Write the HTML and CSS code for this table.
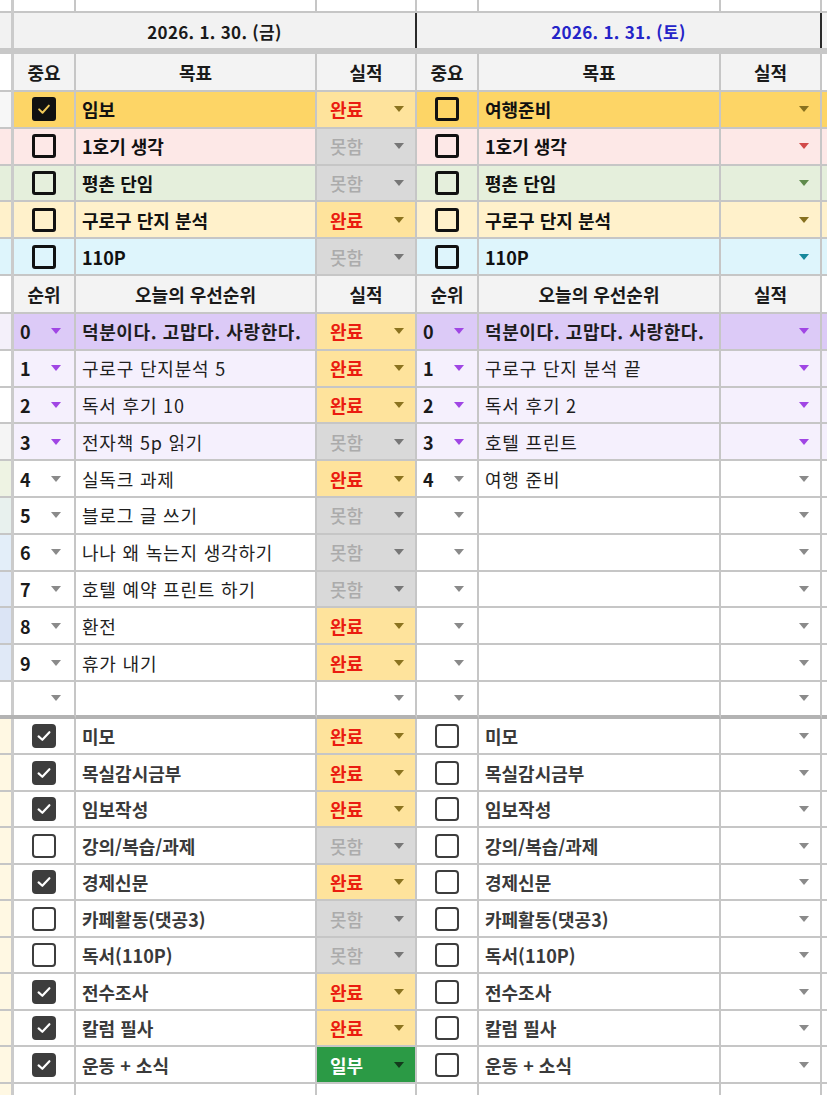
FILE: index.html
```html
<!DOCTYPE html>
<html lang="ko">
<head>
<meta charset="utf-8">
<title>Daily sheet</title>
<link rel="stylesheet" href="styles.css">
</head>
<body>
<div class="sheet">
  <div class="row r-top">
    <div class="c sl"></div><div class="c dv"></div>
    <div class="c"></div><div class="c"></div><div class="c"></div>
    <div class="c"></div><div class="c"></div><div class="c"></div><div class="c edge"></div>
  </div>
  <div class="row r-date">
    <div class="c sl gray"></div><div class="c dv"></div>
    <div class="c date">2026. 1. 30. (금)</div>
    <div class="c date sat">2026. 1. 31. (토)</div>
    <div class="c edge gray"></div>
  </div>
  <div class="freeze"></div>

  <div class="row r-head">
    <div class="c sl"></div><div class="c dv"></div>
    <div class="c hd">중요</div><div class="c hd">목표</div><div class="c hd">실적</div>
    <div class="c hd">중요</div><div class="c hd">목표</div><div class="c hd">실적</div><div class="c edge"></div>
  </div>

  <div class="row goal g-yel">
    <div class="c sl s-wh"></div><div class="c dv"></div>
    <div class="c chk"><span class="cb on"><svg viewBox="0 0 24 24"><polyline points="5.5,12.5 10,17 18.5,7.5"/></svg></span></div>
    <div class="c txt">임보</div>
    <div class="c st ok"><span>완료</span><i class="ar"></i></div>
    <div class="c chk"><span class="cb"></span></div>
    <div class="c txt">여행준비</div>
    <div class="c st none"><span></span><i class="ar"></i></div>
    <div class="c edge"></div>
  </div>
  <div class="row goal g-pink">
    <div class="c sl"></div><div class="c dv"></div>
    <div class="c chk"><span class="cb"></span></div>
    <div class="c txt">1호기 생각</div>
    <div class="c st no"><span>못함</span><i class="ar"></i></div>
    <div class="c chk"><span class="cb"></span></div>
    <div class="c txt">1호기 생각</div>
    <div class="c st none"><span></span><i class="ar"></i></div>
    <div class="c edge"></div>
  </div>
  <div class="row goal g-grn">
    <div class="c sl"></div><div class="c dv"></div>
    <div class="c chk"><span class="cb"></span></div>
    <div class="c txt">평촌 단임</div>
    <div class="c st no"><span>못함</span><i class="ar"></i></div>
    <div class="c chk"><span class="cb"></span></div>
    <div class="c txt">평촌 단임</div>
    <div class="c st none"><span></span><i class="ar"></i></div>
    <div class="c edge"></div>
  </div>
  <div class="row goal g-lyel">
    <div class="c sl"></div><div class="c dv"></div>
    <div class="c chk"><span class="cb"></span></div>
    <div class="c txt">구로구 단지 분석</div>
    <div class="c st ok"><span>완료</span><i class="ar"></i></div>
    <div class="c chk"><span class="cb"></span></div>
    <div class="c txt">구로구 단지 분석</div>
    <div class="c st none"><span></span><i class="ar"></i></div>
    <div class="c edge"></div>
  </div>
  <div class="row goal g-cyan">
    <div class="c sl"></div><div class="c dv"></div>
    <div class="c chk"><span class="cb"></span></div>
    <div class="c txt">110P</div>
    <div class="c st no"><span>못함</span><i class="ar"></i></div>
    <div class="c chk"><span class="cb"></span></div>
    <div class="c txt">110P</div>
    <div class="c st none"><span></span><i class="ar"></i></div>
    <div class="c edge"></div>
  </div>

  <div class="row r-head">
    <div class="c sl"></div><div class="c dv"></div>
    <div class="c hd">순위</div><div class="c hd">오늘의 우선순위</div><div class="c hd">실적</div>
    <div class="c hd">순위</div><div class="c hd">오늘의 우선순위</div><div class="c hd">실적</div><div class="c edge"></div>
  </div>

  <div class="row pr p-top">
    <div class="c sl s-l"></div><div class="c dv"></div>
    <div class="c rk"><span>0</span><i class="ar"></i></div>
    <div class="c txt">덕분이다. 고맙다. 사랑한다.</div>
    <div class="c st ok"><span>완료</span><i class="ar"></i></div>
    <div class="c rk"><span>0</span><i class="ar"></i></div>
    <div class="c txt">덕분이다. 고맙다. 사랑한다.</div>
    <div class="c st none"><span></span><i class="ar"></i></div>
    <div class="c edge"></div>
  </div>
  <div class="row pr p-lav">
    <div class="c sl"></div><div class="c dv"></div>
    <div class="c rk"><span>1</span><i class="ar"></i></div>
    <div class="c txt">구로구 단지분석 5</div>
    <div class="c st ok"><span>완료</span><i class="ar"></i></div>
    <div class="c rk"><span>1</span><i class="ar"></i></div>
    <div class="c txt">구로구 단지 분석 끝</div>
    <div class="c st none"><span></span><i class="ar"></i></div>
    <div class="c edge"></div>
  </div>
  <div class="row pr p-lav">
    <div class="c sl"></div><div class="c dv"></div>
    <div class="c rk"><span>2</span><i class="ar"></i></div>
    <div class="c txt">독서 후기 10</div>
    <div class="c st ok"><span>완료</span><i class="ar"></i></div>
    <div class="c rk"><span>2</span><i class="ar"></i></div>
    <div class="c txt">독서 후기 2</div>
    <div class="c st none"><span></span><i class="ar"></i></div>
    <div class="c edge"></div>
  </div>
  <div class="row pr p-lav">
    <div class="c sl s-f"></div><div class="c dv"></div>
    <div class="c rk"><span>3</span><i class="ar"></i></div>
    <div class="c txt">전자책 5p 읽기</div>
    <div class="c st no"><span>못함</span><i class="ar"></i></div>
    <div class="c rk"><span>3</span><i class="ar"></i></div>
    <div class="c txt">호텔 프린트</div>
    <div class="c st none"><span></span><i class="ar"></i></div>
    <div class="c edge"></div>
  </div>
  <div class="row pr">
    <div class="c sl s-g"></div><div class="c dv"></div>
    <div class="c rk"><span>4</span><i class="ar"></i></div>
    <div class="c txt">실독크 과제</div>
    <div class="c st ok"><span>완료</span><i class="ar"></i></div>
    <div class="c rk"><span>4</span><i class="ar"></i></div>
    <div class="c txt">여행 준비</div>
    <div class="c st none"><span></span><i class="ar"></i></div>
    <div class="c edge"></div>
  </div>
  <div class="row pr">
    <div class="c sl s-gb"></div><div class="c dv"></div>
    <div class="c rk"><span>5</span><i class="ar"></i></div>
    <div class="c txt">블로그 글 쓰기</div>
    <div class="c st no"><span>못함</span><i class="ar"></i></div>
    <div class="c rk"><span></span><i class="ar"></i></div>
    <div class="c txt"></div>
    <div class="c st none"><span></span><i class="ar"></i></div>
    <div class="c edge"></div>
  </div>
  <div class="row pr">
    <div class="c sl s-b1"></div><div class="c dv"></div>
    <div class="c rk"><span>6</span><i class="ar"></i></div>
    <div class="c txt">나나 왜 녹는지 생각하기</div>
    <div class="c st no"><span>못함</span><i class="ar"></i></div>
    <div class="c rk"><span></span><i class="ar"></i></div>
    <div class="c txt"></div>
    <div class="c st none"><span></span><i class="ar"></i></div>
    <div class="c edge"></div>
  </div>
  <div class="row pr">
    <div class="c sl s-b2"></div><div class="c dv"></div>
    <div class="c rk"><span>7</span><i class="ar"></i></div>
    <div class="c txt">호텔 예약 프린트 하기</div>
    <div class="c st no"><span>못함</span><i class="ar"></i></div>
    <div class="c rk"><span></span><i class="ar"></i></div>
    <div class="c txt"></div>
    <div class="c st none"><span></span><i class="ar"></i></div>
    <div class="c edge"></div>
  </div>
  <div class="row pr">
    <div class="c sl s-b3"></div><div class="c dv"></div>
    <div class="c rk"><span>8</span><i class="ar"></i></div>
    <div class="c txt">환전</div>
    <div class="c st ok"><span>완료</span><i class="ar"></i></div>
    <div class="c rk"><span></span><i class="ar"></i></div>
    <div class="c txt"></div>
    <div class="c st none"><span></span><i class="ar"></i></div>
    <div class="c edge"></div>
  </div>
  <div class="row pr">
    <div class="c sl s-b2"></div><div class="c dv"></div>
    <div class="c rk"><span>9</span><i class="ar"></i></div>
    <div class="c txt">휴가 내기</div>
    <div class="c st ok"><span>완료</span><i class="ar"></i></div>
    <div class="c rk"><span></span><i class="ar"></i></div>
    <div class="c txt"></div>
    <div class="c st none"><span></span><i class="ar"></i></div>
    <div class="c edge"></div>
  </div>
  <div class="row pr last">
    <div class="c sl"></div><div class="c dv"></div>
    <div class="c rk"><span></span><i class="ar"></i></div>
    <div class="c txt"></div>
    <div class="c st none"><span></span><i class="ar"></i></div>
    <div class="c rk"><span></span><i class="ar"></i></div>
    <div class="c txt"></div>
    <div class="c st none"><span></span><i class="ar"></i></div>
    <div class="c edge"></div>
  </div>

  <div class="row cl">
    <div class="c sl s-y"></div><div class="c dv"></div>
    <div class="c chk"><span class="cb on"><svg viewBox="0 0 24 24"><polyline points="5.5,12.5 10,16.5 18.5,7.5"/></svg></span></div>
    <div class="c txt">미모</div>
    <div class="c st ok"><span>완료</span><i class="ar"></i></div>
    <div class="c chk"><span class="cb"></span></div>
    <div class="c txt">미모</div>
    <div class="c st none"><span></span><i class="ar"></i></div>
    <div class="c edge"></div>
  </div>
  <div class="row cl">
    <div class="c sl s-y"></div><div class="c dv"></div>
    <div class="c chk"><span class="cb on"><svg viewBox="0 0 24 24"><polyline points="5.5,12.5 10,16.5 18.5,7.5"/></svg></span></div>
    <div class="c txt">목실감시금부</div>
    <div class="c st ok"><span>완료</span><i class="ar"></i></div>
    <div class="c chk"><span class="cb"></span></div>
    <div class="c txt">목실감시금부</div>
    <div class="c st none"><span></span><i class="ar"></i></div>
    <div class="c edge"></div>
  </div>
  <div class="row cl">
    <div class="c sl s-y"></div><div class="c dv"></div>
    <div class="c chk"><span class="cb on"><svg viewBox="0 0 24 24"><polyline points="5.5,12.5 10,16.5 18.5,7.5"/></svg></span></div>
    <div class="c txt">임보작성</div>
    <div class="c st ok"><span>완료</span><i class="ar"></i></div>
    <div class="c chk"><span class="cb"></span></div>
    <div class="c txt">임보작성</div>
    <div class="c st none"><span></span><i class="ar"></i></div>
    <div class="c edge"></div>
  </div>
  <div class="row cl">
    <div class="c sl s-y"></div><div class="c dv"></div>
    <div class="c chk"><span class="cb"></span></div>
    <div class="c txt">강의/복습/과제</div>
    <div class="c st no"><span>못함</span><i class="ar"></i></div>
    <div class="c chk"><span class="cb"></span></div>
    <div class="c txt">강의/복습/과제</div>
    <div class="c st none"><span></span><i class="ar"></i></div>
    <div class="c edge"></div>
  </div>
  <div class="row cl">
    <div class="c sl s-y"></div><div class="c dv"></div>
    <div class="c chk"><span class="cb on"><svg viewBox="0 0 24 24"><polyline points="5.5,12.5 10,16.5 18.5,7.5"/></svg></span></div>
    <div class="c txt">경제신문</div>
    <div class="c st ok"><span>완료</span><i class="ar"></i></div>
    <div class="c chk"><span class="cb"></span></div>
    <div class="c txt">경제신문</div>
    <div class="c st none"><span></span><i class="ar"></i></div>
    <div class="c edge"></div>
  </div>
  <div class="row cl">
    <div class="c sl s-y"></div><div class="c dv"></div>
    <div class="c chk"><span class="cb"></span></div>
    <div class="c txt">카페활동(댓공3)</div>
    <div class="c st no"><span>못함</span><i class="ar"></i></div>
    <div class="c chk"><span class="cb"></span></div>
    <div class="c txt">카페활동(댓공3)</div>
    <div class="c st none"><span></span><i class="ar"></i></div>
    <div class="c edge"></div>
  </div>
  <div class="row cl">
    <div class="c sl s-y"></div><div class="c dv"></div>
    <div class="c chk"><span class="cb"></span></div>
    <div class="c txt">독서(110P)</div>
    <div class="c st no"><span>못함</span><i class="ar"></i></div>
    <div class="c chk"><span class="cb"></span></div>
    <div class="c txt">독서(110P)</div>
    <div class="c st none"><span></span><i class="ar"></i></div>
    <div class="c edge"></div>
  </div>
  <div class="row cl">
    <div class="c sl s-y"></div><div class="c dv"></div>
    <div class="c chk"><span class="cb on"><svg viewBox="0 0 24 24"><polyline points="5.5,12.5 10,16.5 18.5,7.5"/></svg></span></div>
    <div class="c txt">전수조사</div>
    <div class="c st ok"><span>완료</span><i class="ar"></i></div>
    <div class="c chk"><span class="cb"></span></div>
    <div class="c txt">전수조사</div>
    <div class="c st none"><span></span><i class="ar"></i></div>
    <div class="c edge"></div>
  </div>
  <div class="row cl">
    <div class="c sl s-y"></div><div class="c dv"></div>
    <div class="c chk"><span class="cb on"><svg viewBox="0 0 24 24"><polyline points="5.5,12.5 10,16.5 18.5,7.5"/></svg></span></div>
    <div class="c txt">칼럼 필사</div>
    <div class="c st ok"><span>완료</span><i class="ar"></i></div>
    <div class="c chk"><span class="cb"></span></div>
    <div class="c txt">칼럼 필사</div>
    <div class="c st none"><span></span><i class="ar"></i></div>
    <div class="c edge"></div>
  </div>
  <div class="row cl">
    <div class="c sl s-y"></div><div class="c dv"></div>
    <div class="c chk"><span class="cb on"><svg viewBox="0 0 24 24"><polyline points="5.5,12.5 10,16.5 18.5,7.5"/></svg></span></div>
    <div class="c txt">운동 + 소식</div>
    <div class="c st part"><span>일부</span><i class="ar"></i></div>
    <div class="c chk"><span class="cb"></span></div>
    <div class="c txt">운동 + 소식</div>
    <div class="c st none"><span></span><i class="ar"></i></div>
    <div class="c edge"></div>
  </div>
  <div class="row cl">
    <div class="c sl s-y"></div><div class="c dv"></div>
    <div class="c"></div><div class="c"></div><div class="c"></div>
    <div class="c"></div><div class="c"></div><div class="c"></div><div class="c edge"></div>
  </div>
</div>
</body>
</html>
```

FILE: styles.css
```css
* { box-sizing: border-box; }
html, body { margin: 0; padding: 0; background: #ffffff; }
body {
  font-family: "Noto Sans CJK KR", "Noto Sans", sans-serif;
  color: #1a1a1a;
  width: 827px;
  height: 1095px;
  overflow: hidden;
}
.sheet { width: 827px; }

.row {
  display: grid;
  grid-template-columns: 11px 3px 62px 241px 100px 62px 242px 101px 1fr;
  height: 36.8px;
}
.c {
  border-right: 2px solid #c6c6c6;
  border-bottom: 2px solid #c6c6c6;
  display: flex;
  align-items: center;
  min-width: 0;
  overflow: hidden;
  white-space: nowrap;
}
.c.sl { border-right: none; }
.c.dv { background: #cbcbcb; border: none; }
.c.edge { border-right: none; }

.r-top { height: 13px; }

.r-date {
  grid-template-columns: 11px 3px 403px 405px 1fr;
  height: 35px;
}
.r-date .c { border-bottom: none; background: #f2f2f2; }
.r-date .c.dv { background: #cbcbcb; }
.c.date {
  justify-content: center;
  border-right: 2px solid #2a2a2a;
  font-size: 17px;
  font-weight: 700;
  letter-spacing: 0.3px;
  color: #1a1a1a;
  padding-top: 1px;
}
.c.date.sat { color: #2424c8; }
.c.gray { background: #f2f2f2; }

.freeze { height: 6px; background: #c8c8c8; }

.r-head { height: 38px; }
.r-head .c.hd {
  justify-content: center;
  background: #f3f3f3;
  font-weight: 700;
  font-size: 18px;
  color: #1a1a1a;
}

.c.txt { padding-left: 6px; font-size: 18px; }
.goal .c.txt { font-weight: 700; color: #111; }
.pr .c.txt { font-weight: 400; color: #1e1e1e; letter-spacing: 0.8px; }
.pr.p-top .c.txt { font-weight: 700; letter-spacing: 0.6px; }
.cl .c.txt { font-weight: 700; color: #3a3a3a; }

.c.chk { justify-content: center; }
.cb {
  width: 24px;
  height: 24px;
  border: 3px solid #111;
  border-radius: 3px;
  display: flex;
  align-items: center;
  justify-content: center;
}
.cb svg { width: 22px; height: 22px; fill: none; stroke-width: 2.6; stroke-linecap: round; stroke-linejoin: round; }
.cb.on { background: #111; }
.goal .cb.on svg { stroke: #f0c95a; }
.cl .cb { border: 2.5px solid #3d3d3d; border-radius: 4px; }
.cl .cb.on { background: #3d3d3d; }
.cl .cb.on svg { stroke: #ffffff; }

.ar {
  display: block;
  width: 0;
  height: 0;
  border-left: 5.5px solid transparent;
  border-right: 5.5px solid transparent;
  border-top: 6px solid #858585;
  flex: none;
}

.c.st {
  justify-content: space-between;
  padding: 0 11px 0 13px;
  font-size: 18px;
  font-weight: 700;
}
.c.st.ok { background: #fee39c; color: #ea1c10; }
.c.st.ok .ar { border-top-color: #8b731f; }
.c.st.no { background: #d9d9d9; color: #ababab; font-weight: 500; }
.c.st.no .ar { border-top-color: #777777; }
.c.st.part { background: #2b9a45; color: #ffffff; }
.c.st.part .ar { border-top-color: #133a1c; }
.c.st.none .ar { border-top-color: #8a8a8a; }

.c.rk {
  justify-content: space-between;
  padding: 0 13px 0 6px;
  font-size: 18px;
  font-weight: 700;
  color: #1a1a1a;
}
.c.rk .ar { border-top-color: #8a8a8a; }

/* goal rows */
.g-yel .c.txt, .g-yel .c.chk, .g-yel .c.st.none, .g-yel .c.edge { background: #fdd566; }
.g-yel .c.st.none .ar { border-top-color: #88711f; }
.g-pink .c.txt, .g-pink .c.chk, .g-pink .c.st.none, .g-pink .c.edge, .g-pink .c.sl { background: #fde8e7; }
.g-pink .c.st.none .ar { border-top-color: #d24a4a; }
.g-grn .c.txt, .g-grn .c.chk, .g-grn .c.st.none, .g-grn .c.edge, .g-grn .c.sl { background: #e5efdc; }
.g-grn .c.st.none .ar { border-top-color: #5f8a4c; }
.g-lyel .c.txt, .g-lyel .c.chk, .g-lyel .c.st.none, .g-lyel .c.edge, .g-lyel .c.sl { background: #fff1cb; }
.g-lyel .c.st.none .ar { border-top-color: #86701f; }
.g-cyan .c.txt, .g-cyan .c.chk, .g-cyan .c.st.none, .g-cyan .c.edge, .g-cyan .c.sl { background: #def5fc; }
.g-cyan .c.st.none .ar { border-top-color: #16889c; }
.c.sl.s-wh { background: #f7f7f7; }

/* priority rows */
.p-top .c.rk, .p-top .c.txt, .p-top .c.st.none, .p-top .c.edge { background: #dccaf7; }
.p-lav .c.rk, .p-lav .c.txt, .p-lav .c.st.none, .p-lav .c.edge { background: #f5f0fd; }
.p-top .c.rk .ar, .p-lav .c.rk .ar,
.p-top .c.st.none .ar, .p-lav .c.st.none .ar { border-top-color: #a046e4; }
.pr.last { height: 37px; }
.pr.last .c { border-bottom: 4px solid #b3b3b3; }
.pr.last .c.dv { border-bottom: 4px solid #b3b3b3; }

.c.sl.s-l { background: #f4f0fa; }
.c.sl.s-f { background: #f5f5f5; }
.c.sl.s-g { background: #eef3e3; }
.c.sl.s-gb { background: #e8f1ee; }
.c.sl.s-b1 { background: #e3eef9; }
.c.sl.s-b2 { background: #e0e9f7; }
.c.sl.s-b3 { background: #dbe4f5; }
.c.sl.s-y { background: #fff8e3; }

.cl { height: 36.5px; }
```
